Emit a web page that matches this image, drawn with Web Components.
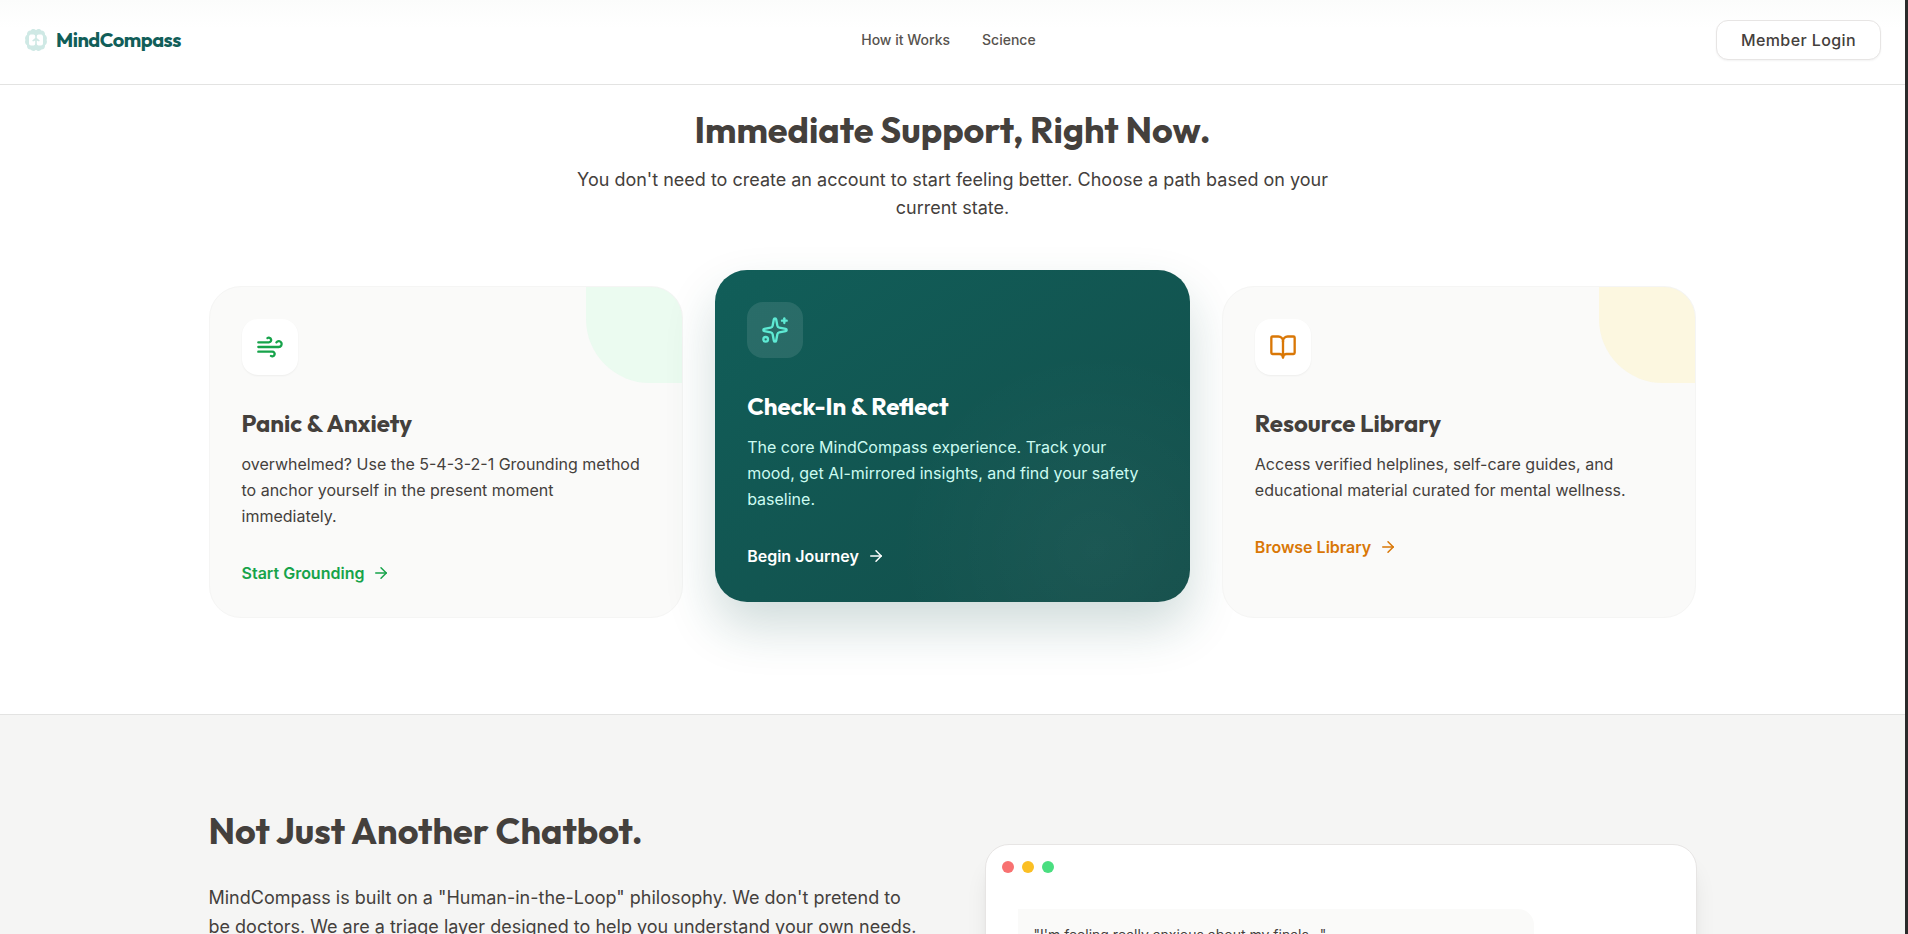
<!DOCTYPE html>
<html lang="en">
<head>
<meta charset="utf-8">
<meta name="viewport" content="width=device-width, initial-scale=1">
<title>MindCompass</title>
<style>
  html { background: #fff; }
  body {
    margin: 0; height: 100vh; overflow: hidden; box-sizing: border-box;
    border-right: 3px solid #2b2b2b; background: #fff; color: #44403c;
    font-family: Inter, "Liberation Sans", sans-serif;
    --display: Outfit, Lato, sans-serif;
  }
</style>
</head>
<body>
<mc-page></mc-page>
<script>
const define = (name, html) => {
  const tpl = document.createElement('template');
  tpl.innerHTML = html;
  customElements.define(name, class extends HTMLElement {
    constructor() {
      super();
      this.attachShadow({ mode: 'open' }).append(tpl.content.cloneNode(true));
    }
  });
};

const ICONS = {
  wind: '<path d="M12.8 19.6A2 2 0 1 0 14 16H2"/><path d="M17.5 8a2.5 2.5 0 1 1 2 4H2"/><path d="M9.8 4.4A2 2 0 1 1 11 8H2"/>',
  sparkles: '<path d="M11.017 2.814a1 1 0 0 1 1.966 0l1.051 5.558a2 2 0 0 0 1.594 1.594l5.558 1.051a1 1 0 0 1 0 1.966l-5.558 1.051a2 2 0 0 0-1.594 1.594l-1.051 5.558a1 1 0 0 1-1.966 0l-1.051-5.558a2 2 0 0 0-1.594-1.594l-5.558-1.051a1 1 0 0 1 0-1.966l5.558-1.051a2 2 0 0 0 1.594-1.594z"/><path d="M20 2v4"/><path d="M22 4h-4"/><circle cx="4" cy="20" r="2"/>',
  book: '<path d="M12 7v14"/><path d="M3 18a1 1 0 0 1-1-1V4a1 1 0 0 1 1-1h5a4 4 0 0 1 4 4 4 4 0 0 1 4-4h5a1 1 0 0 1 1 1v13a1 1 0 0 1-1 1h-6a3 3 0 0 0-3 3 3 3 0 0 0-3-3z"/>',
  arrow: '<path d="M5 12h14"/><path d="m12 5 7 7-7 7"/>',
};

customElements.define('mc-icon', class extends HTMLElement {
  constructor() { super(); this.attachShadow({ mode: 'open' }); }
  connectedCallback() {
    this.shadowRoot.innerHTML = `
      <style>
        :host { display: block; flex: none; width: var(--size, 28px); height: var(--size, 28px); }
        svg { display: block; width: 100%; height: 100%; fill: none; stroke: currentColor;
              stroke-width: 2; stroke-linecap: round; stroke-linejoin: round; }
      </style>
      <svg viewBox="0 0 24 24" aria-hidden="true">${ICONS[this.getAttribute('name')] || ''}</svg>`;
  }
});

define('mc-logo', `
  <style>
    :host { display: block; }
    a { display: flex; align-items: center; gap: 8px; color: #115e59; text-decoration: none;
        font: 700 20px/28px var(--display); letter-spacing: -0.025em; }
    svg { display: block; width: 24px; height: 24px; }
  </style>
  <a href="#">
    <svg viewBox="0 0 24 24" aria-hidden="true">
      <path fill="#cfe9e5" d="M12 2.200C10.500 .6 8 .8 6.800 2.400 4.300 2.300 2.600 4.300 3 6.800 1.200 8 .6 10.200 1.400 12 .6 14 1.200 16.100 3 17.200 2.700 19.800 4.300 21.500 6.500 21.600 8 23.400 10.600 23.400 12 21.800 13.400 23.400 16 23.400 17.500 21.600 19.700 21.500 21.300 19.800 21 17.200 22.800 16.100 23.400 14 22.600 12 23.400 10.200 22.800 8 21 6.800 21.400 4.300 19.700 2.300 17.200 2.400 16 .8 13.500 .6 12 2.200z"/>
      <path fill="#fff" d="M6.500 6.500H9.500Q11.200 6.500 11.200 8V10L8.200 12.600 9 13.400 11.200 12.400V15.500Q11.200 17.500 9.500 17.500H7Q5 17.500 5 15.500V8.500Q5 7.500 6.500 6.500z"/>
      <path fill="#fff" d="M17.500 6.500H14.500Q12.800 6.500 12.800 8V10L15.800 12.600 15 13.400 12.800 12.400V15.500Q12.800 17.500 14.500 17.500H17Q19 17.500 19 15.500V8.500Q19 7.500 17.500 6.500z"/>
    </svg>
    <span>MindCompass</span>
  </a>`);

define('mc-header', `
  <style>
    :host { display: block; }
    header { display: flex; justify-content: space-between; align-items: center;
      padding: 20px 24px 24px; border-bottom: 1px solid #e3e3e2;
      background: linear-gradient(#fbfcfb, #fff 28px); }
    nav { display: flex; gap: 32px; }
    nav a { font: 500 14px/20px Inter, sans-serif; color: #57534e; text-decoration: none; }
    button { box-sizing: border-box; height: 40px; padding: 0 24px; border: 1px solid #e7e5e4;
      border-radius: 12px; background: #fff; color: #44403c; letter-spacing: 0.025em;
      font: 500 16px/24px Inter, sans-serif; box-shadow: 0 1px 2px rgba(0,0,0,.05); }
  </style>
  <header>
    <mc-logo></mc-logo>
    <nav aria-label="Main"><a href="#how">How it Works</a><a href="#science">Science</a></nav>
    <button type="button">Member Login</button>
  </header>`);

define('mc-path-card', `
  <style>
    :host { display: block; position: relative; overflow: hidden; box-sizing: border-box; padding: 32px;
      border: 1px solid #f5f5f4; border-radius: 32px; background: #fafaf9;
      --title: #44403c; --text: #44403c; --tile: #fff; }
    :host([tone=green]) { --accent: #16a34a; --corner: rgba(220,252,231,.5); }
    :host([tone=amber]) { --accent: #d97706; --corner: rgba(254,243,199,.5); }
    :host([tone=teal]) { --accent: #5eead4; --title: #fff; --text: #ccfbf1; --tile: rgba(255,255,255,.1);
      --link: #fff; border: 0; top: -16px; background:
        radial-gradient(circle 200px at 80% 84%, rgba(255,255,255,.04), transparent),
        linear-gradient(to bottom right, #115e59, #134e4a);
      box-shadow: 0 25px 50px rgba(19,78,74,.2); }
    :host([tone=teal]) .corner { display: none; }
    :host([tone=teal]) .tile { box-shadow: none; }
    .corner { position: absolute; top: 0; right: 0; width: 96px; height: 96px;
      border-bottom-left-radius: 64px; background: var(--corner); }
    .tile { display: grid; place-items: center; width: 56px; height: 56px; margin-bottom: 32px;
      border-radius: 16px; background: var(--tile); color: var(--accent); box-shadow: 0 1px 2px rgba(0,0,0,.05); }
    h3 { margin: 0 0 12px; font: 700 24px/32px var(--display); color: var(--title); }
    p { margin: 0 0 32px; font-size: 16px; line-height: 26px; color: var(--text); }
    a { display: flex; width: fit-content; align-items: center; gap: 8px; text-decoration: none;
      font-weight: 600; font-size: 16px; line-height: 24px; color: var(--link, var(--accent)); }
    a ::slotted(mc-icon) { --size: 18px; }
  </style>
  <div class="corner"></div>
  <div class="tile"><slot name="icon"></slot></div>
  <h3><slot name="title"></slot></h3>
  <p><slot></slot></p>
  <a href="#"><slot name="action"></slot><slot name="arrow"></slot></a>`);

define('mc-support', `
  <style>
    :host { display: block; padding: 25px 24px 96px; }
    h2 { margin: 0 0 16px; text-align: center; font: 700 36px/40px var(--display); }
    .lead { max-width: 768px; margin: 0 auto 64px; text-align: center; font-size: 18px; line-height: 28px; }
    .grid { display: grid; grid-template-columns: repeat(3, 1fr); gap: 32px; max-width: 1488px; margin: 0 auto; }
  </style>
  <section>
    <h2>Immediate Support, Right Now.</h2>
    <p class="lead">You don't need to create an account to start feeling better. Choose a path based on your current state.</p>
    <div class="grid">
      <mc-path-card tone="green">
        <mc-icon slot="icon" name="wind"></mc-icon><span slot="title">Panic &amp; Anxiety</span>overwhelmed? Use the 5-4-3-2-1 Grounding method to anchor yourself in the present moment immediately.<span slot="action">Start Grounding</span><mc-icon slot="arrow" name="arrow"></mc-icon>
      </mc-path-card>
      <mc-path-card tone="teal">
        <mc-icon slot="icon" name="sparkles"></mc-icon><span slot="title">Check-In &amp; Reflect</span>The core MindCompass experience. Track your mood, get AI-mirrored insights, and find your safety baseline.<span slot="action">Begin Journey</span><mc-icon slot="arrow" name="arrow"></mc-icon>
      </mc-path-card>
      <mc-path-card tone="amber">
        <mc-icon slot="icon" name="book"></mc-icon><span slot="title">Resource Library</span>Access verified helplines, self-care guides, and educational material curated for mental wellness.<span slot="action">Browse Library</span><mc-icon slot="arrow" name="arrow"></mc-icon>
      </mc-path-card>
    </div>
  </section>`);

define('mc-chat-window', `
  <style>
    :host { display: block; box-sizing: border-box; border: 1px solid #e7e5e4; border-radius: 24px;
      padding: 16px 32px 32px; background: #fff; box-shadow: 0 20px 25px -5px rgba(0,0,0,.1), 0 8px 10px -6px rgba(0,0,0,.1); }
    .dots { display: flex; gap: 8px; margin: 0 0 36px -16px; }
    .dots i { width: 12px; height: 12px; border-radius: 50%; background: #f87171; }
    .dots i:nth-child(2) { background: #fbbf24; }
    .dots i:nth-child(3) { background: #4ade80; }
    .bubble { box-sizing: border-box; width: 80%; padding: 16px; border-radius: 0 16px 16px 16px;
      background: #fafaf9; font-size: 14px; line-height: 20px; }
  </style>
  <div class="dots"><i></i><i></i><i></i></div>
  <div class="bubble"><slot></slot></div>`);

define('mc-science', `
  <style>
    :host { display: block; padding: 96px 24px; border-top: 1px solid #e3e3e2; background: #f5f5f4; }
    section { display: grid; grid-template-columns: 1fr 1fr; gap: 64px; max-width: 1488px; margin: 0 auto; }
    h2 { margin: 0 0 32px; font: 700 36px/40px var(--display); }
    p { margin: 0; font-size: 18px; line-height: 29px; }
    mc-chat-window { margin-top: 33px; }
  </style>
  <section>
    <div>
      <h2>Not Just Another Chatbot.</h2>
      <p>MindCompass is built on a "Human-in-the-Loop" philosophy. We don't pretend to be doctors. We are a triage layer designed to help you understand your own needs.</p>
    </div>
    <mc-chat-window>"I'm feeling really anxious about my finals..."</mc-chat-window>
  </section>`);

define('mc-page', `
  <style>:host { display: block; } main { display: block; }</style>
  <mc-header></mc-header>
  <main>
    <mc-support></mc-support>
    <mc-science></mc-science>
  </main>`);
</script>
</body>
</html>
